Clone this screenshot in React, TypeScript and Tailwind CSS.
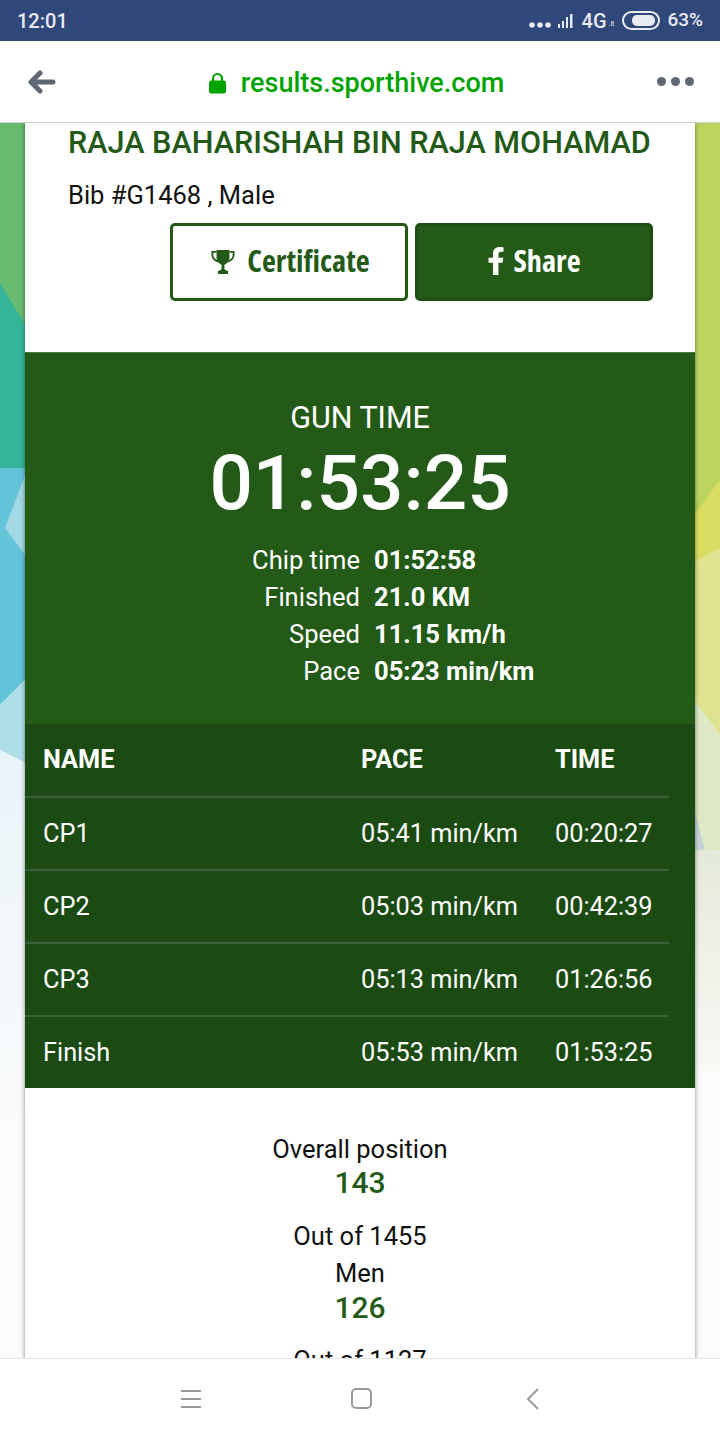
import { FaFacebookF } from "react-icons/fa";

const stats = [
  { label: "Chip time", value: "01:52:58" },
  { label: "Finished", value: "21.0 KM" },
  { label: "Speed", value: "11.15 km/h" },
  { label: "Pace", value: "05:23 min/km" },
];

const splits = [
  { name: "CP1", pace: "05:41 min/km", time: "00:20:27" },
  { name: "CP2", pace: "05:03 min/km", time: "00:42:39" },
  { name: "CP3", pace: "05:13 min/km", time: "01:26:56" },
  { name: "Finish", pace: "05:53 min/km", time: "01:53:25" },
];

function StatusBar() {
  return (
    <div className="flex h-[41px] items-center justify-between bg-[#30477a] pl-[17px] pr-[17px] text-[#e8ebf2]">
      <span className="text-[20px] font-medium">12:01</span>
      <div className="flex items-center">
        <svg width="48" height="20" viewBox="0 0 48 20" className="mr-[6px]">
          <circle cx="4" cy="14" r="2.8" fill="#e8ebf2" />
          <circle cx="12" cy="14" r="2.8" fill="#e8ebf2" />
          <circle cx="20" cy="14" r="2.8" fill="#e8ebf2" />
          <path d="M30 13h2v4h-2zM34 10h2v7h-2zM38 6h2v11h-2zM42 3h2.500v14H42z" fill="#e8ebf2" />
        </svg>
        <span className="text-[20px] font-medium">4G</span>
        <span className="ml-[2px] mt-[8px] text-[7px] leading-none">.it</span>
        <div className="ml-[8px] flex h-[19px] w-[38px] items-center justify-end rounded-full border-2 border-[#e8ebf2] pr-[3px]">
          <div className="h-[11px] w-[23px] rounded-[5px] bg-[#e8ebf2]" />
        </div>
        <span className="ml-[7px] text-[19px] font-medium">63%</span>
      </div>
    </div>
  );
}

function BrowserBar() {
  return (
    <div className="relative flex h-[82px] items-center justify-between border-b border-[#cfcfcf] bg-white pl-[28px] pr-[26px]">
      <svg width="28" height="24" viewBox="0 0 28 24" fill="none" className="mt-[1px]">
        <path d="M12 3 3 12l9 9M4 12h21" stroke="#5f6773" strokeWidth="5" strokeLinecap="round" strokeLinejoin="round" />
      </svg>
      <div className="mt-[3px] flex items-center">
        <svg width="17" height="22" viewBox="0 0 17 22" className="mr-[15px]">
          <path d="M4 10V6.500a4.500 4.500 0 0 1 9 0V10" fill="none" stroke="#00a300" strokeWidth="2.200" />
          <rect x="0" y="8.500" width="17" height="13" rx="2" fill="#00a300" />
        </svg>
        <span className="text-[27px] font-medium text-[#00a300]">results.sporthive.com</span>
      </div>
      <div className="flex gap-[5px]">
        <span className="h-[9px] w-[9px] rounded-full bg-[#5f6773]" />
        <span className="h-[9px] w-[9px] rounded-full bg-[#5f6773]" />
        <span className="h-[9px] w-[9px] rounded-full bg-[#5f6773]" />
      </div>
    </div>
  );
}

// low-poly page background, only the strips beside the card show
function Backdrop() {
  return (
    <svg className="absolute inset-0 h-full w-full" viewBox="0 0 720 1235" preserveAspectRatio="none">
      <defs>
        <linearGradient id="fadeLeft" x1="0" y1="0" x2="0" y2="1">
          <stop offset="0" stopColor="#e9f4f9" />
          <stop offset="0.55" stopColor="#f4f8fb" />
          <stop offset="1" stopColor="#fbfbfa" />
        </linearGradient>
        <linearGradient id="fadeRight" x1="0" y1="0" x2="0" y2="1">
          <stop offset="0" stopColor="#e4ead9" />
          <stop offset="1" stopColor="#f9f8f5" />
        </linearGradient>
      </defs>
      <rect width="720" height="1235" fill="#fbfbfa" />
      <polygon points="0,0 30,0 30,215 0,165" fill="#66bb6f" />
      <polygon points="0,160 30,210 30,345 0,345" fill="#34b598" />
      <polygon points="0,345 30,345 30,552 0,582" fill="#62c3d9" />
      <polygon points="5,405 25,352 25,432" fill="#a2d9e4" />
      <polygon points="0,582 30,552 30,642 0,627" fill="#aedfe9" />
      <polygon points="0,627 30,642 30,1050 0,1050" fill="url(#fadeLeft)" />
      <polygon points="690,0 720,0 720,360 690,400" fill="#bcd55f" />
      <polygon points="690,397 720,357 720,425 690,442" fill="#d9de62" />
      <polygon points="690,442 720,425 720,612 690,572" fill="#dde38f" />
      <polygon points="690,572 720,612 720,730 690,730" fill="#dce8c6" />
      <polygon points="690,670 705,727 690,727" fill="#c6d3d8" />
      <polygon points="690,727 720,727 720,950 690,950" fill="url(#fadeRight)" />
    </svg>
  );
}

function Trophy() {
  return (
    <svg width="24" height="28" viewBox="0 0 26 28" fill="#245a17">
      <path d="M6 1h14v8c0 4-3 7-5.500 8v4c0 1 2 2 4 3v3H7.500v-3c2-1 4-2 4-3v-4C9 16 6 13 6 9z" />
      <path d="M6 3H1.500v3c0 4 3 6.500 6 7.500M20 3h4.500v3c0 4-3 6.500-6 7.500" fill="none" stroke="#245a17" strokeWidth="2" />
    </svg>
  );
}

function Header() {
  return (
    <div className="h-[229px] bg-white pl-[43px] pr-[42px] pt-[1px]">
      <h1 className="h-[37px] whitespace-nowrap text-[30.600px] leading-[37px] text-[#245a17] font-medium">
        RAJA BAHARISHAH BIN RAJA MOHAMAD
      </h1>
      <p className="mt-[19px] text-[25.500px] leading-[30px] text-[#111]">Bib #G1468 , Male</p>
      <div className="mt-[13px] flex justify-end gap-[7px]">
        <button className="flex h-[78px] w-[238px] items-center justify-center gap-[12px] rounded-[5px] border-[3px] border-[#245a17] bg-white pl-[3px] text-[#245a17]">
          <Trophy />
          <span className="-mt-[2px] font-['Open_Sans'] text-[30.400px] font-bold [font-stretch:75%]">Certificate</span>
        </button>
        <button className="flex h-[78px] w-[238px] items-center justify-center gap-[3px] rounded-[5px] border-[3px] border-[#1f4e14] bg-[#245a17] pr-[5px] text-white">
          <FaFacebookF className="-mt-[2px] text-[28px]" />
          <span className="-mt-[2px] font-['Open_Sans'] text-[30.400px] font-bold [font-stretch:75%]">Share</span>
        </button>
      </div>
    </div>
  );
}

function GunTime() {
  return (
    <div className="h-[372px] border-t border-[#4f7a45] bg-[#245a17] pt-[47px] text-center text-white">
      <div className="text-[30.500px] leading-[36px]">GUN TIME</div>
      <div className="mt-[2px] text-[76.500px] font-medium leading-[90px]">01:53:25</div>
      <div className="mt-[13px] flex flex-col">
        {stats.map((s) => (
          <div key={s.label} className="grid h-[37px] grid-cols-[335px_1fr] items-center gap-[14px] text-[25.500px]">
            <span className="text-right">{s.label}</span>
            <span className="text-left font-bold">{s.value}</span>
          </div>
        ))}
      </div>
    </div>
  );
}

function Splits() {
  return (
    <div className="bg-[#1b4b12] text-[25.300px] text-white">
      <div className="w-[644px]">
        <div className="grid h-[72px] grid-cols-[318px_194px_114px] items-center pb-[1px] pl-[18px] font-bold">
          <span>NAME</span>
          <span>PACE</span>
          <span>TIME</span>
        </div>
        {splits.map((row) => (
          <div
            key={row.name}
            className="grid h-[73px] grid-cols-[318px_194px_114px] items-center border-t-2 border-[#38613a] pl-[18px]"
          >
            <span>{row.name}</span>
            <span>{row.pace}</span>
            <span>{row.time}</span>
          </div>
        ))}
      </div>
    </div>
  );
}

function Positions() {
  return (
    <div className="bg-white pt-[43px] text-center text-[25.500px] text-[#111]">
      <div className="leading-[36px]">Overall position</div>
      <div className="text-[30px] font-medium leading-[32px] text-[#245a17]">143</div>
      <div className="mt-[19px] leading-[36px]">Out of 1455</div>
      <div className="leading-[38px]">Men</div>
      <div className="text-[30px] font-medium leading-[32px] text-[#245a17]">126</div>
      <div className="mt-[18px] leading-[36px]">Out of 1127</div>
    </div>
  );
}

function NavBar() {
  return (
    <div className="relative flex h-[82px] items-start border-t border-[#e4e4e4] bg-white pl-[181px] pt-[29px]">
      <div className="flex h-[20px] w-[20px] flex-col justify-between pt-[2px]">
        <span className="h-[2px] bg-[#9a9a9a]" />
        <span className="h-[2px] bg-[#9a9a9a]" />
        <span className="h-[2px] bg-[#9a9a9a]" />
      </div>
      <div className="ml-[150px] h-[21px] w-[21px] rounded-[5px] border-2 border-[#9a9a9a]" />
      <svg width="14" height="22" viewBox="0 0 14 22" fill="none" className="ml-[154px]">
        <path d="M12 1 2 11l10 10" stroke="#9a9a9a" strokeWidth="2" />
      </svg>
    </div>
  );
}

export default function App() {
  return (
    <div className="flex h-[1440px] w-[720px] flex-col overflow-hidden bg-white font-['Roboto',sans-serif]">
      <StatusBar />
      <BrowserBar />
      <div className="relative flex-1 overflow-hidden">
        <Backdrop />
        <div className="relative mx-[25px] shadow-[0_0_4px_rgba(0,0,0,0.5)]">
          <Header />
          <GunTime />
          <Splits />
          <Positions />
        </div>
      </div>
      <NavBar />
    </div>
  );
}
